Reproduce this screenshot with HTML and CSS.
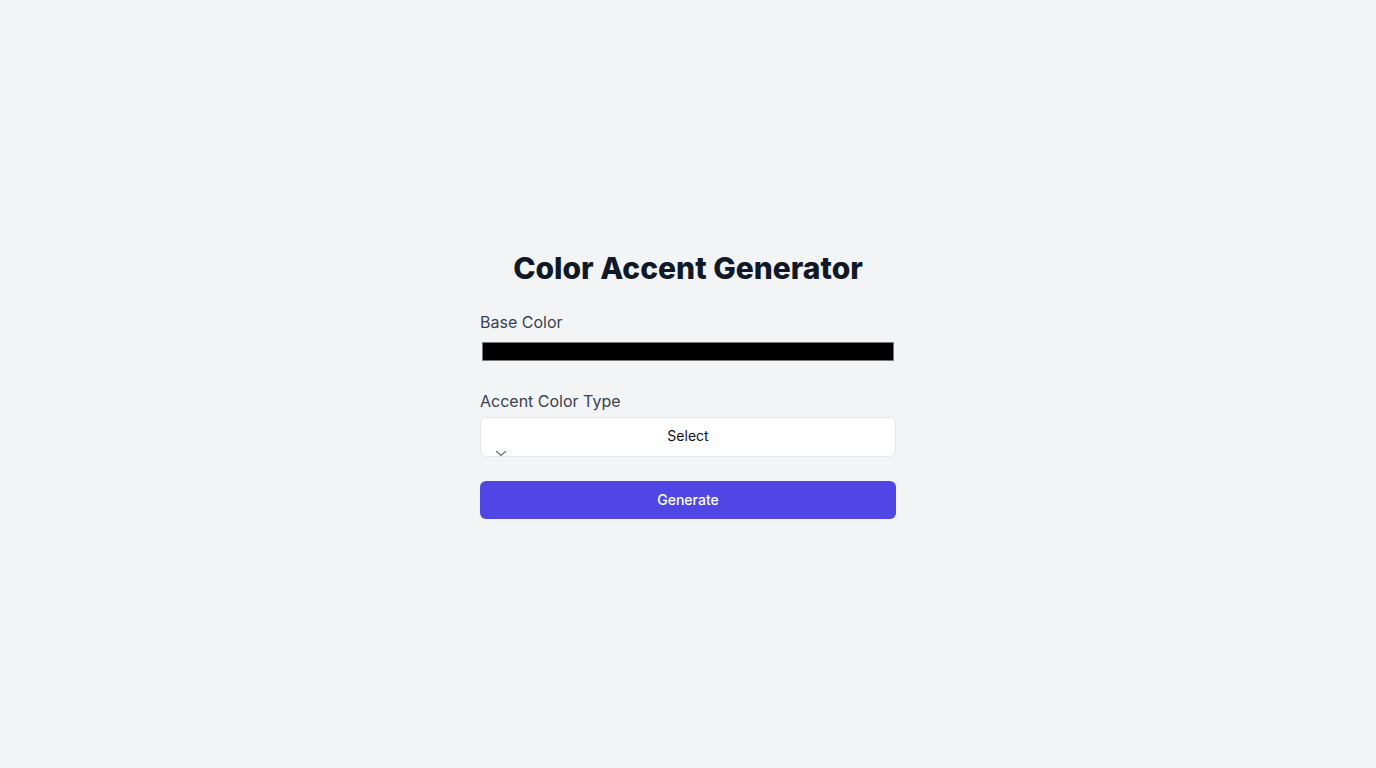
FILE: index.html
```html
<!DOCTYPE html>
<html lang="en">
<head>
<meta charset="utf-8">
<title>Color Accent Generator</title>
<link rel="stylesheet" href="styles.css">
</head>
<body>
<main class="page">
  <div class="panel">
    <h1 class="title">Color Accent Generator</h1>
    <div class="field">
      <label class="label" for="base">Base Color</label>
      <input class="color-input" id="base" type="color" value="#000000">
    </div>
    <div class="field">
      <label class="label">Accent Color Type</label>
      <button class="select" type="button">
        <span class="select-value">Select</span>
        <svg class="chev" width="16" height="16" viewBox="0 0 16 16" fill="none" stroke="currentColor" stroke-width="1.2" stroke-linecap="round" stroke-linejoin="round"><path d="M3.5 5.5 L8 9.5 L12.5 5.5"/></svg>
      </button>
    </div>
    <button class="generate" type="button">Generate</button>
  </div>
</main>
</body>
</html>
```

FILE: styles.css
```css
* { box-sizing: border-box; }
html, body { margin: 0; padding: 0; }
body {
  background: #f3f4f6;
  font-family: Inter, "Noto Sans", "Liberation Sans", sans-serif;
  color: #111827;
}
.page {
  min-height: 100vh;
  display: flex;
  align-items: center;
  justify-content: center;
}
.panel {
  width: 416px;
  display: flex;
  flex-direction: column;
}
.title {
  margin: 0 0 24px;
  font-size: 30px;
  line-height: 36px;
  font-weight: 800;
  text-align: center;
  color: #111827;
  letter-spacing: 0;
}
.field {
  display: flex;
  flex-direction: column;
  margin-bottom: 24px;
}
.label {
  font-size: 16px;
  line-height: 24px;
  color: #374151;
  margin-bottom: 4px;
}
.color-input {
  display: block;
  width: 100%;
  height: 27px;
  padding: 0;
  margin: 0;
  border: 0;
  background: transparent;
}
.select {
  display: block;
  width: 100%;
  height: 40px;
  padding: 8px 12px;
  margin: 0;
  background: #ffffff;
  border: 1px solid #e5e7eb;
  border-radius: 6px;
  text-align: left;
  font-family: inherit;
  color: #111827;
  font-size: 14px;
  cursor: pointer;
}
.select-value {
  display: block;
  text-align: center;
  line-height: 20px;
  font-size: 14px;
  color: #111111;
}
.chev {
  display: block;
  margin-left: 0;
  margin-top: 0;
  color: #6b7280;
}
.generate {
  display: block;
  width: 100%;
  height: 38px;
  margin: 0;
  border: 0;
  border-radius: 6px;
  background: #4f46e5;
  color: #ffffff;
  font-family: inherit;
  font-size: 14px;
  font-weight: 500;
  line-height: 20px;
  cursor: pointer;
}
```
